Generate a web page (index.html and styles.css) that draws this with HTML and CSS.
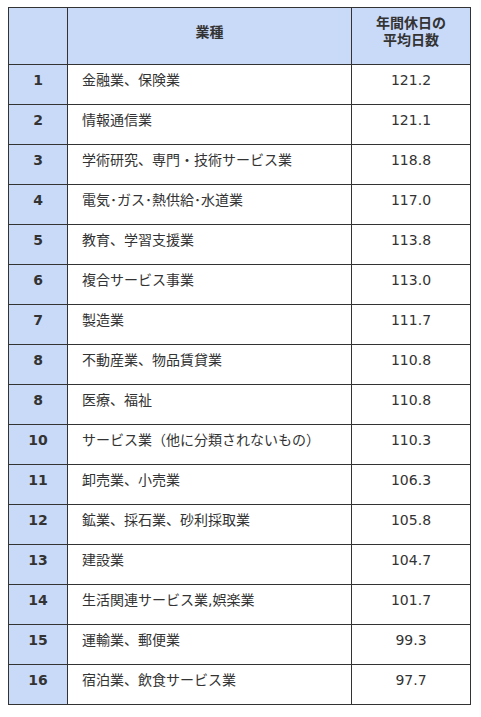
FILE: index.html
```html
<!DOCTYPE html>
<html lang="ja">
<head>
<meta charset="utf-8">
<title>業種別 年間休日の平均日数</title>
<link rel="stylesheet" href="styles.css">
</head>
<body>
<table class="rank-table">
  <colgroup>
    <col class="col-rank">
    <col class="col-name">
    <col class="col-days">
  </colgroup>
  <thead>
    <tr>
      <th class="head"></th>
      <th class="head">業種</th>
      <th class="head">年間休日の<br>平均日数</th>
    </tr>
  </thead>
  <tbody>
    <tr><td class="rank">1</td><td class="name">金融業、保険業</td><td class="days">121.2</td></tr>
    <tr><td class="rank">2</td><td class="name">情報通信業</td><td class="days">121.1</td></tr>
    <tr><td class="rank">3</td><td class="name">学術研究、専門・技術サービス業</td><td class="days">118.8</td></tr>
    <tr><td class="rank">4</td><td class="name">電気･ガス･熱供給･水道業</td><td class="days">117.0</td></tr>
    <tr><td class="rank">5</td><td class="name">教育、学習支援業</td><td class="days">113.8</td></tr>
    <tr><td class="rank">6</td><td class="name">複合サービス事業</td><td class="days">113.0</td></tr>
    <tr><td class="rank">7</td><td class="name">製造業</td><td class="days">111.7</td></tr>
    <tr><td class="rank">8</td><td class="name">不動産業、物品賃貸業</td><td class="days">110.8</td></tr>
    <tr><td class="rank">8</td><td class="name">医療、福祉</td><td class="days">110.8</td></tr>
    <tr><td class="rank">10</td><td class="name">サービス業（他に分類されないもの）</td><td class="days">110.3</td></tr>
    <tr><td class="rank">11</td><td class="name">卸売業、小売業</td><td class="days">106.3</td></tr>
    <tr><td class="rank">12</td><td class="name">鉱業、採石業、砂利採取業</td><td class="days">105.8</td></tr>
    <tr><td class="rank">13</td><td class="name">建設業</td><td class="days">104.7</td></tr>
    <tr><td class="rank">14</td><td class="name">生活関連サービス業,娯楽業</td><td class="days">101.7</td></tr>
    <tr><td class="rank">15</td><td class="name">運輸業、郵便業</td><td class="days">99.3</td></tr>
    <tr><td class="rank">16</td><td class="name">宿泊業、飲食サービス業</td><td class="days">97.7</td></tr>
  </tbody>
</table>
</body>
</html>
```
FILE: styles.css
```css
html, body {
  margin: 0;
  padding: 0;
  background: #ffffff;
}

body {
  padding: 7px 0 0 8px;
  font-family: "DejaVu Sans", "Noto Sans CJK JP", sans-serif;
  font-size: 14px;
  color: #333333;
}

.rank-table {
  border-collapse: collapse;
  width: 462px;
  table-layout: fixed;
}

.col-rank { width: 59px; }
.col-name { width: 284px; }
.col-days { width: 119px; }

.rank-table th,
.rank-table td {
  border: 1px solid #333333;
  padding: 7px 14px 15px;
  line-height: 17px;
  height: 17px;
  vertical-align: middle;
}

.head {
  background: #c9daf8;
  font-weight: bold;
  text-align: center;
}

.rank {
  background: #c9daf8;
  font-weight: bold;
  text-align: center;
}

.name {
  text-align: left;
}

.days {
  text-align: center;
}
```
